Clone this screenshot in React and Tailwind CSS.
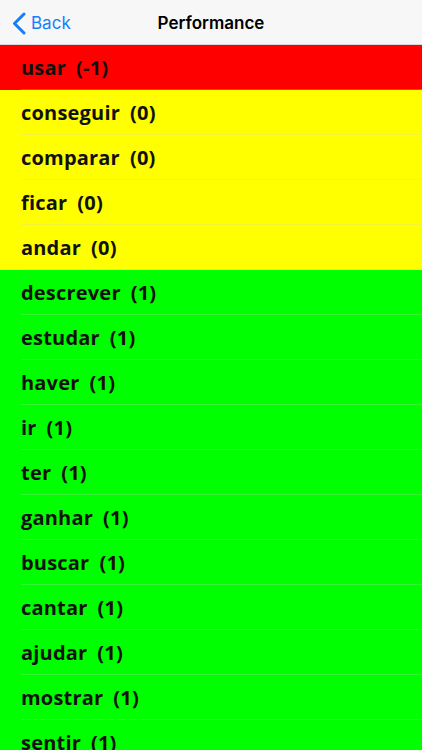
import React from "react";

const rows = [
  ["usar", -1],
  ["conseguir", 0],
  ["comparar", 0],
  ["ficar", 0],
  ["andar", 0],
  ["descrever", 1],
  ["estudar", 1],
  ["haver", 1],
  ["ir", 1],
  ["ter", 1],
  ["ganhar", 1],
  ["buscar", 1],
  ["cantar", 1],
  ["ajudar", 1],
  ["mostrar", 1],
  ["sentir", 1],
];

function rowColor(score) {
  if (score < 0) return "bg-[#ff0000]";
  if (score === 0) return "bg-[#ffff00]";
  return "bg-[#00ff00]";
}

function lineColor(score) {
  if (score < 0) return "border-[#ff3333]";
  if (score === 0) return "border-[#f2f23a]";
  return "border-[#33f233]";
}

export default function App() {
  return (
    <div className="w-[422px] h-[750px] overflow-hidden bg-white font-['Open_Sans',sans-serif]">
      <header className="relative h-[45px] bg-[#f7f7f7] border-b border-[#d8d8d8] flex items-center justify-center pt-[3px]">
        <button className="absolute left-[12px] top-0 h-full flex items-center gap-[5px] text-[#157efb] pt-[3px]">
          <svg width="14" height="23" viewBox="0 0 14 23" fill="none">
            <path d="M12 2 L2.5 11.5 L12 21" stroke="currentColor" strokeWidth="3" strokeLinecap="round" strokeLinejoin="round" />
          </svg>
          <span className="text-[17px] font-['Inter',sans-serif]">Back</span>
        </button>
        <h1 className="text-[17px] font-semibold text-black font-['Inter',sans-serif]">Performance</h1>
      </header>
      <ul>
        {rows.map(([word, score]) => (
          <li key={word} className={`${rowColor(score)} h-[45px] pl-[21px]`}>
            <div className={`h-full flex items-center border-b ${lineColor(score)} text-[20px] font-bold tracking-[0.2px] text-[#111] pt-[2px]`}>
              {word}
              <span className="ml-[10px]">({score})</span>
            </div>
          </li>
        ))}
      </ul>
    </div>
  );
}
